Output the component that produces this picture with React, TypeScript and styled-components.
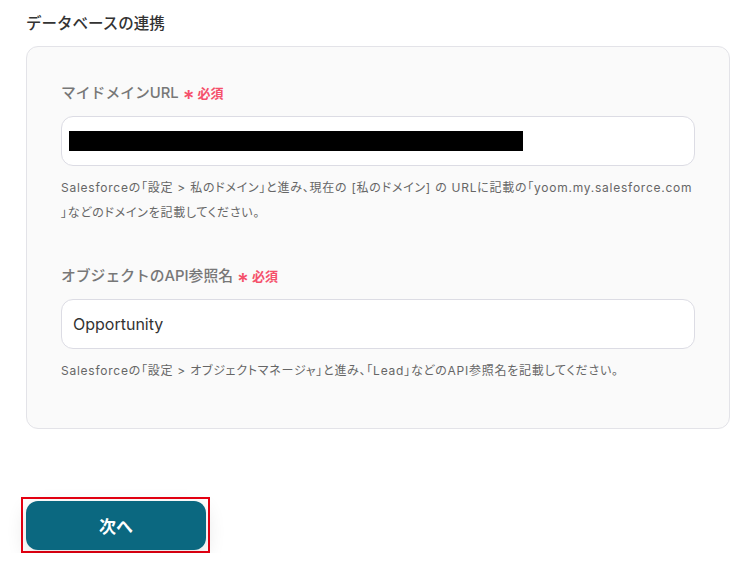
import React from "react";
import styled, { createGlobalStyle } from "styled-components";

const Global = createGlobalStyle`
  html, body { margin: 0; padding: 0; background: #ffffff; }
  body { font-family: "Inter", "Noto Sans CJK JP", sans-serif; }
`;

const Page = styled.div`
  padding: 13px 19px 0 26px;
  display: flex;
  flex-direction: column;
`;

const Title = styled.h2`
  margin: 0;
  font-size: 15.5px;
  line-height: 22px;
  font-weight: 500;
  color: #333333;
`;

const Card = styled.section`
  margin-top: 11px;
  width: 704px;
  box-sizing: border-box;
  background: #fafafa;
  border: 1px solid #e3e3e8;
  border-radius: 12px;
  padding: 36px 34px 45px 34px;
  display: flex;
  flex-direction: column;
`;

const Field = styled.div<{ $first?: boolean }>`
  display: flex;
  flex-direction: column;
  margin-top: ${(p) => (p.$first ? "0" : "41px")};
`;

const Label = styled.div`
  display: flex;
  align-items: center;
  gap: 4px;
  font-size: 14.8px;
  line-height: 20px;
  font-weight: 500;
  color: #777777;
`;

const Required = styled.span`
  display: inline-flex;
  align-items: center;
  gap: 3px;
  color: #f5506b;
  font-size: 13px;
  font-weight: 700;
`;

const Star = styled.span`
  font-size: 22px;
  line-height: 12px;
  font-weight: 600;
  position: relative;
  top: 5px;
`;

const InputBox = styled.div`
  margin-top: 13px;
  height: 50px;
  box-sizing: border-box;
  background: #ffffff;
  border: 1px solid #dcdce4;
  border-radius: 12px;
  display: flex;
  align-items: center;
  padding: 0 11px;
  font-size: 16px;
  color: #333333;
`;

const Redacted = styled.div`
  width: 454px;
  height: 20px;
  background: #000000;
  margin-left: -4px;
`;

const Help = styled.p`
  margin: 9px 0 0;
  font-size: 12px;
  line-height: 25px;
  color: #666666;
  font-feature-settings: "palt";
  letter-spacing: 0.75px;
  line-break: anywhere;
`;

const Highlight = styled.div`
  margin-top: 68px;
  margin-left: -5px;
  align-self: flex-start;
  display: flex;
  border: 2px solid #e60012;
  padding: 2px 2px 1px 3px;
`;

const Button = styled.button`
  width: 180px;
  height: 49px;
  border: none;
  border-radius: 12px;
  background: #0b6880;
  color: #ffffff;
  font-family: "Noto Sans CJK JP", sans-serif;
  font-size: 17px;
  font-weight: 700;
  box-shadow: 0 6px 20px rgba(0, 0, 0, 0.12);
  cursor: pointer;
`;

export default function App() {
  return (
    <>
      <Global />
      <Page>
        <Title>データベースの連携</Title>
        <Card>
          <Field $first>
            <Label>
              マイドメインURL
              <Required>
                <Star>*</Star>必須
              </Required>
            </Label>
            <InputBox>
              <Redacted />
            </InputBox>
            <Help>
              Salesforceの「設定 &gt; 私のドメイン」と進み、現在の [私のドメイン] の URLに記載の「yoom.my.salesforce.com」などのドメインを記載してください。
            </Help>
          </Field>
          <Field>
            <Label>
              オブジェクトのAPI参照名
              <Required>
                <Star>*</Star>必須
              </Required>
            </Label>
            <InputBox>Opportunity</InputBox>
            <Help>
              Salesforceの「設定 &gt; オブジェクトマネージャ」と進み、「Lead」などのAPI参照名を記載してください。
            </Help>
          </Field>
        </Card>
        <Highlight>
          <Button>次へ</Button>
        </Highlight>
      </Page>
    </>
  );
}
